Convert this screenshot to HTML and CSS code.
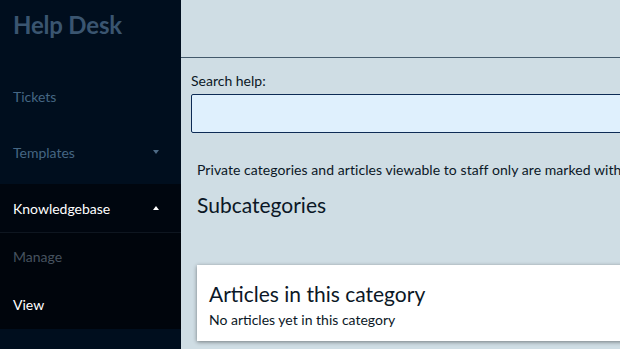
FILE: index.html
```html
<!DOCTYPE html>
<html>
<head>
<meta charset="utf-8">
<link rel="stylesheet" href="styles.css">
</head>
<body>
<div class="app">
  <aside class="sidebar">
    <div class="brand">Help Desk</div>
    <nav class="nav">
      <div class="nav-item">Tickets</div>
      <div class="nav-item">Templates<span class="caret caret-down"></span></div>
      <div class="nav-item active">Knowledgebase<span class="caret caret-up"></span></div>
      <div class="submenu">
        <div class="sub-item">Manage</div>
        <div class="sub-item current">View</div>
      </div>
    </nav>
  </aside>
  <main class="main">
    <header class="topbar"></header>
    <section class="search">
      <label class="search-label" for="q">Search help:</label>
      <input class="search-input" id="q" type="text">
    </section>
    <section class="content">
      <p class="notice">Private categories and articles viewable to staff only are marked with</p>
      <h2 class="section-title">Subcategories</h2>
      <div class="card">
        <h2 class="card-title">Articles in this category</h2>
        <p class="card-text">No articles yet in this category</p>
      </div>
    </section>
  </main>
</div>
</body>
</html>
```
FILE: styles.css
```css
html, body {
  margin: 0;
  padding: 0;
  height: 349px;
  overflow: hidden;
}
body {
  font-family: Lato, "Open Sans", sans-serif;
  color: #0b1726;
  background: #cfdde4;
}
.app {
  display: flex;
  width: 1000px;
  height: 349px;
}
.sidebar {
  width: 181px;
  flex: none;
  background: #000e1e;
  display: flex;
  flex-direction: column;
}
.brand {
  font-size: 24px;
  font-weight: 700;
  color: #3a5570;
  line-height: 29px;
  padding: 10px 13px 0;
  height: 59px;
  box-sizing: border-box;
  letter-spacing: -0.2px;
}
.nav {
  display: flex;
  flex-direction: column;
  margin-top: 9px;
}
.nav-item {
  height: 56px;
  padding: 0 13px;
  display: flex;
  align-items: center;
  justify-content: space-between;
  font-size: 14px;
  color: #456683;
}
.nav-item.active {
  height: 48px;
  margin-top: 4px;
  background: #00060f;
  color: #ffffff;
  border-bottom: 1px solid #0e1620;
}
.caret {
  width: 0;
  height: 0;
  margin-right: 9px;
  border-left: 3px solid transparent;
  border-right: 3px solid transparent;
}
.caret-down {
  border-top: 4px solid #4d6a85;
}
.caret-up {
  border-bottom: 4px solid #ffffff;
}
.submenu {
  background: #00050c;
  display: flex;
  flex-direction: column;
}
.sub-item {
  height: 47px;
  padding: 0 13px;
  display: flex;
  align-items: center;
  font-size: 14px;
  color: #46525f;
}
.sub-item.current {
  height: 49px;
  color: #ffffff;
}
.main {
  flex: 1;
  display: flex;
  flex-direction: column;
}
.topbar {
  height: 57px;
  border-bottom: 1px solid #43596b;
  flex: none;
}
.search {
  padding: 14px 0 0 10px;
  display: flex;
  flex-direction: column;
}
.search-label {
  font-size: 14px;
  line-height: 17px;
  margin-bottom: 5px;
}
.search-input {
  height: 39px;
  box-sizing: border-box;
  border: 1px solid #0d2b55;
  border-radius: 2px;
  background: #dff0fd;
  margin: 0;
  width: 760px;
}
.content {
  padding: 0 0 0 16px;
}
.notice {
  margin: 28px 0 0;
  font-size: 14px;
  line-height: 17px;
  white-space: nowrap;
  letter-spacing: 0.06px;
}
.section-title {
  margin: 14px 0 0;
  font-size: 21px;
  font-weight: 400;
  line-height: 25px;
}
.card {
  margin-top: 48px;
  background: #ffffff;
  box-shadow: 0 1px 4px rgba(0, 0, 0, 0.45);
  padding: 16px 12px 13px;
  width: 760px;
}
.card-title {
  margin: 0;
  font-size: 21px;
  font-weight: 400;
  line-height: 25px;
}
.card-text {
  margin: 5px 0 0;
  font-size: 14px;
  line-height: 17px;
}
```
